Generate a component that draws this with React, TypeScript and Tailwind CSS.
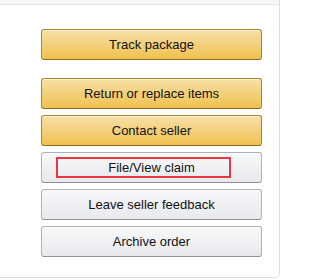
const yellow =
  "border border-[#a88734] border-b-[#846a29] bg-gradient-to-b from-[#f7dfa5] to-[#f0c14b]";
const grey =
  "border border-[#adb1b8] border-b-[#8d9096] bg-gradient-to-b from-[#f7f8fa] to-[#e7e9ec]";

function ActionButton({
  label,
  kind,
  marked,
}: {
  label: string;
  kind: "yellow" | "grey";
  marked?: boolean;
}) {
  return (
    <div
      className={`relative flex h-[31px] w-[221px] items-center justify-center rounded-[3px] text-[13px] text-[#111] shadow-[inset_0_1px_0_rgba(255,255,255,0.6)] ${
        kind === "yellow" ? yellow : grey
      }`}
    >
      <span>{label}</span>
      {marked && (
        <div className="absolute left-[14px] top-[4px] h-[21px] w-[175px] border-2 border-[#e8383f]" />
      )}
    </div>
  );
}

export default function App() {
  return (
    <div
      className="h-[280px] w-[283px] bg-white"
      style={{ fontFamily: '"Liberation Sans", Arial, sans-serif' }}
    >
      <div className="h-[278px] w-[280px] overflow-hidden rounded-br-[5px] border-r border-b border-[#dddddd] bg-white">
        <div className="h-[5px] border-b border-[#e3e3e3] bg-[#f6f6f6]" />
        <div className="flex flex-col pl-[41px] pt-[24px]">
          <ActionButton label="Track package" kind="yellow" />
          <div className="mt-[18px] flex flex-col gap-[6px]">
            <ActionButton label="Return or replace items" kind="yellow" />
            <ActionButton label="Contact seller" kind="yellow" />
            <ActionButton label="File/View claim" kind="grey" marked />
            <ActionButton label="Leave seller feedback" kind="grey" />
            <ActionButton label="Archive order" kind="grey" />
          </div>
        </div>
      </div>
    </div>
  );
}
